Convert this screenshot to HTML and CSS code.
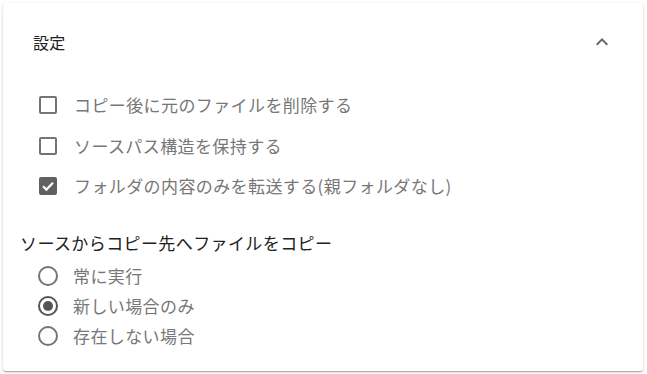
FILE: index.html
```html
<!DOCTYPE html>
<html lang="ja">
<head>
<meta charset="utf-8">
<link rel="stylesheet" href="styles.css">
</head>
<body>
<div class="card">
  <div class="header">
    <span class="title">設定</span>
    <svg class="chevron" viewBox="0 0 24 24" width="24" height="24"><path d="M7.41 15.41 12 10.83l4.59 4.58L18 14l-6-6-6 6z" fill="#666"/></svg>
  </div>
  <div class="checks">
    <label class="check-row"><span class="box"></span><span class="label">コピー後に元のファイルを削除する</span></label>
    <label class="check-row"><span class="box"></span><span class="label">ソースパス構造を保持する</span></label>
    <label class="check-row"><span class="box checked"><svg viewBox="0 0 18 18" width="18" height="18"><polyline points="4,9.3 7.4,12.6 14,5.8" fill="none" stroke="#fff" stroke-width="2.2"/></svg></span><span class="label">フォルダの内容のみを転送する(親フォルダなし)</span></label>
  </div>
  <div class="group-title">ソースからコピー先へファイルをコピー</div>
  <div class="radios">
    <label class="radio-row"><span class="circle"></span><span class="label">常に実行</span></label>
    <label class="radio-row"><span class="circle on"></span><span class="label">新しい場合のみ</span></label>
    <label class="radio-row"><span class="circle"></span><span class="label">存在しない場合</span></label>
  </div>
</div>
</body>
</html>
```
FILE: styles.css
```css
html, body {
  margin: 0;
  padding: 0;
  background: #ffffff;
}
body {
  font-family: "Noto Sans CJK JP", "Noto Sans", sans-serif;
  padding: 3px;
}
.card {
  width: 640px;
  height: 368px;
  background: #fff;
  border-radius: 3px;
  box-shadow: 0 1px 3px rgba(0,0,0,0.2), 0 1px 1px rgba(0,0,0,0.14), 0 2px 1px -1px rgba(0,0,0,0.12);
  box-sizing: border-box;
}
.header {
  height: 78px;
  display: flex;
  align-items: center;
  justify-content: space-between;
  padding: 0 29px 0 30px;
}
.title {
  font-size: 16px;
  color: #222;
  letter-spacing: 0.3px;
}
.chevron {
  display: block;
}
.checks {
  padding: 4px 0 0 36px;
}
.check-row {
  height: 40.5px;
  display: flex;
  align-items: center;
  gap: 17px;
}
.box {
  width: 18px;
  height: 18px;
  box-sizing: border-box;
  border: 2px solid #757575;
  border-radius: 2px;
  position: relative;
}
.box.checked {
  background: #616161;
  border-color: #616161;
}
.box svg {
  display: block;
  position: absolute;
  left: -2px;
  top: -2px;
}
.label {
  font-size: 17px;
  letter-spacing: 0.4px;
  color: #777;
  line-height: 24px;
}
.group-title {
  margin-top: 24px;
  padding-left: 17px;
  font-size: 17px;
  letter-spacing: 0.4px;
  line-height: 24px;
  color: #222;
}
.radios {
  margin-top: 6px;
  padding-left: 35px;
}
.radio-row {
  height: 30px;
  display: flex;
  align-items: center;
  gap: 15px;
}
.circle {
  width: 20px;
  height: 20px;
  box-sizing: border-box;
  border: 2px solid #757575;
  border-radius: 50%;
  display: flex;
  align-items: center;
  justify-content: center;
}
.circle.on {
  border-color: #555;
}
.circle.on::after {
  content: "";
  width: 10px;
  height: 10px;
  border-radius: 50%;
  background: #555;
}
```
